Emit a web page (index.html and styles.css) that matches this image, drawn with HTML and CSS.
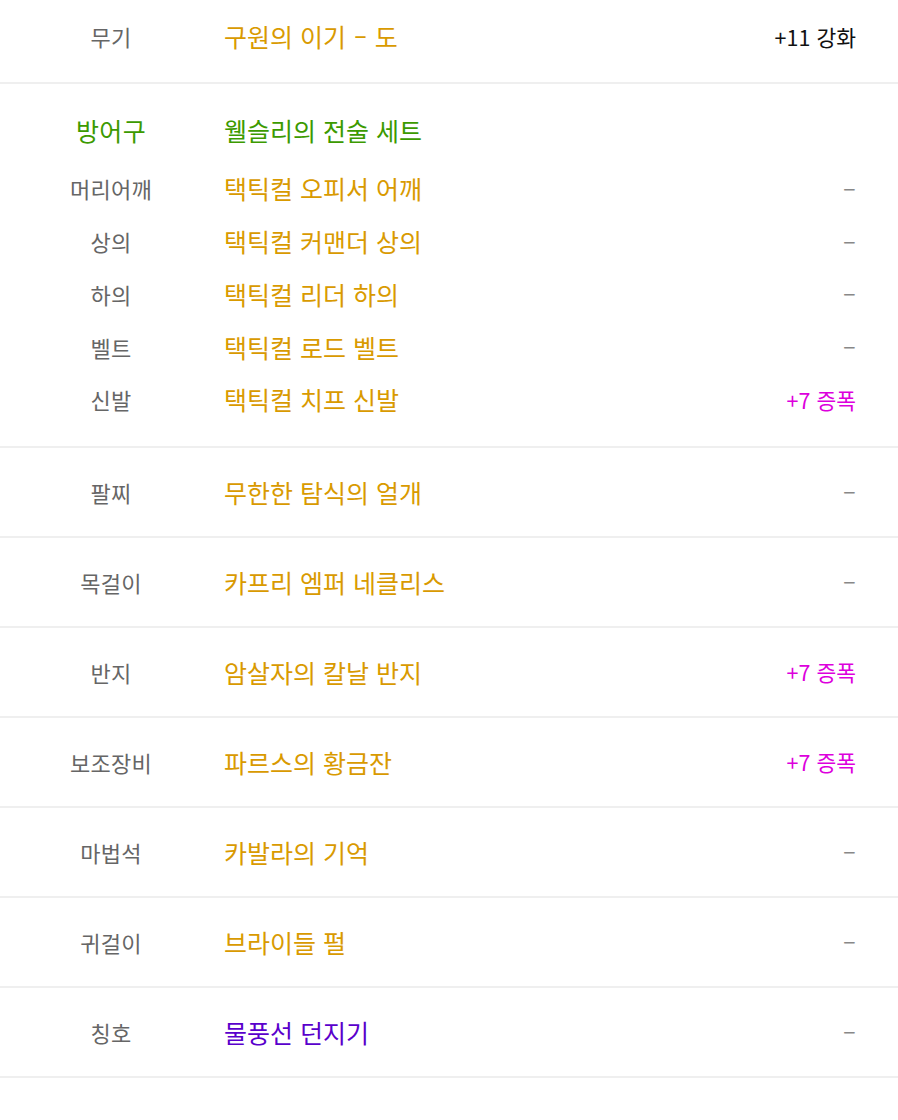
FILE: index.html
```html
<!DOCTYPE html>
<html lang="ko">
<head>
    <meta charset="UTF-8">
    <meta name="viewport" content="width=device-width, initial-scale=1.0">
    <title>장비</title>
    <link rel="stylesheet" href="styles.css">
</head>
<body>
    <div class="equip">
        <div class="row row-top">
            <span class="label">무기</span>
            <span class="name orange">구원의 이기 <span class="hy">-</span> 도</span>
            <span class="value black">+11 강화</span>
        </div>

        <div class="armor">
            <div class="armor-head">
                <span class="label green">방어구</span>
                <span class="name green">웰슬리의 전술 세트</span>
            </div>
            <div class="sub">
                <span class="label">머리어깨</span>
                <span class="name orange">택틱컬 오피서 어깨</span>
                <span class="value"><span class="dash">-</span></span>
            </div>
            <div class="sub">
                <span class="label">상의</span>
                <span class="name orange">택틱컬 커맨더 상의</span>
                <span class="value"><span class="dash">-</span></span>
            </div>
            <div class="sub">
                <span class="label">하의</span>
                <span class="name orange">택틱컬 리더 하의</span>
                <span class="value"><span class="dash">-</span></span>
            </div>
            <div class="sub">
                <span class="label">벨트</span>
                <span class="name orange">택틱컬 로드 벨트</span>
                <span class="value"><span class="dash">-</span></span>
            </div>
            <div class="sub">
                <span class="label">신발</span>
                <span class="name orange">택틱컬 치프 신발</span>
                <span class="value pink">+7 증폭</span>
            </div>
        </div>

        <div class="row">
            <span class="label">팔찌</span>
            <span class="name orange">무한한 탐식의 얼개</span>
            <span class="value"><span class="dash">-</span></span>
        </div>
        <div class="row">
            <span class="label">목걸이</span>
            <span class="name orange">카프리 엠퍼 네클리스</span>
            <span class="value"><span class="dash">-</span></span>
        </div>
        <div class="row">
            <span class="label">반지</span>
            <span class="name orange">암살자의 칼날 반지</span>
            <span class="value pink">+7 증폭</span>
        </div>
        <div class="row">
            <span class="label">보조장비</span>
            <span class="name orange">파르스의 황금잔</span>
            <span class="value pink">+7 증폭</span>
        </div>
        <div class="row">
            <span class="label">마법석</span>
            <span class="name orange">카발라의 기억</span>
            <span class="value"><span class="dash">-</span></span>
        </div>
        <div class="row">
            <span class="label">귀걸이</span>
            <span class="name orange">브라이들 펄</span>
            <span class="value"><span class="dash">-</span></span>
        </div>
        <div class="row">
            <span class="label">칭호</span>
            <span class="name purple">물풍선 던지기</span>
            <span class="value"><span class="dash">-</span></span>
        </div>
    </div>
</body>
</html>
```

FILE: styles.css
```css
body {
    margin: 0;
    padding: 0;
    background-color: #fff;
    font-family: "Noto Sans CJK KR", "Noto Sans", sans-serif;
}

.equip {
    width: 898px;
}

.row,
.armor-head,
.sub {
    display: grid;
    grid-template-columns: 222px 1fr auto;
    align-items: center;
    padding-right: 42px;
}

.row {
    height: 88px;
    border-bottom: 2px solid #efefef;
}

.row-top {
    height: 72px;
    padding-bottom: 10px;
}

.armor {
    padding: 26px 0 20px;
    border-bottom: 2px solid #efefef;
}

.armor-head {
    height: 40px;
    margin-bottom: 12px;
}

.sub {
    height: 52.75px;
}

.label {
    text-align: center;
    font-size: 22px;
    color: #666;
    letter-spacing: 0.3px;
}

.name {
    padding-left: 2px;
    font-size: 25px;
    letter-spacing: 0;
}

.value {
    font-size: 21.5px;
    text-align: right;
}

.hy,
.dash {
    display: inline-block;
}

.hy {
    margin: 0 3px;
    transform: scaleX(1.6);
}

.dash {
    color: #888;
    transform: scaleX(1.9);
    transform-origin: right center;
}

.orange { color: #d99a00; }
.green { color: #3c9a00; }
.purple { color: #5a00cc; }
.black { color: #111; }
.pink { color: #dd00dd; }

.armor-head .label {
    font-size: 25px;
    color: #3c9a00;
}
```
